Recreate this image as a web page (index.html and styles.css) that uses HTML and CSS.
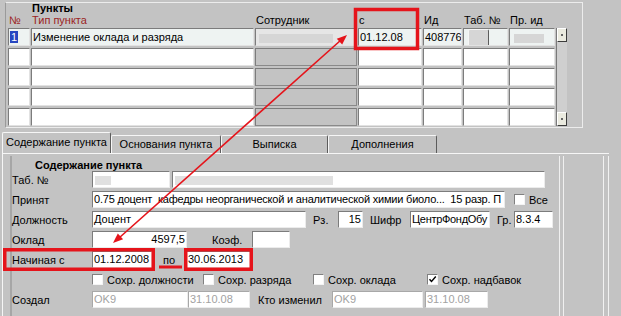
FILE: index.html
```html
<!DOCTYPE html>
<html lang="ru">
<head>
  <meta charset="UTF-8" />
  <title>Пункты приказа</title>
  <link rel="stylesheet" href="styles.css">
</head>
<body>

  <div class="screen">

    <div class="points">
      <div class="points-title">Пункты</div>

      <div class="points-grid">
        <div class="hd req">№</div>
        <div class="hd req">Тип пункта</div>
        <div class="hd">Сотрудник</div>
        <div class="hd">с</div>
        <div class="hd">Ид</div>
        <div class="hd">Таб. №</div>
        <div class="hd">Пр. ид</div>
        <div class="hd"></div>

        <div class="cell sel"><span class="cursor">1</span></div>
        <div class="cell sel">Изменение оклада и разряда</div>
        <div class="cell grey"><span class="blur emp"></span></div>
        <div class="cell sel">01.12.08</div>
        <div class="cell sel">408776</div>
        <div class="cell sel"><span class="blur tab"></span></div>
        <div class="cell sel"><span class="blur prid"></span></div>

        <div class="scroll">
          <div class="scroll-btn"></div>
          <div class="scroll-track"></div>
          <div class="scroll-btn"></div>
        </div>

        <div class="cell"></div><div class="cell"></div><div class="cell dim"></div><div class="cell"></div><div class="cell"></div><div class="cell"></div><div class="cell"></div>
        <div class="cell"></div><div class="cell"></div><div class="cell dim"></div><div class="cell"></div><div class="cell"></div><div class="cell"></div><div class="cell"></div>
        <div class="cell"></div><div class="cell"></div><div class="cell dim"></div><div class="cell"></div><div class="cell"></div><div class="cell"></div><div class="cell"></div>
        <div class="cell"></div><div class="cell"></div><div class="cell dim"></div><div class="cell"></div><div class="cell"></div><div class="cell"></div><div class="cell"></div>
      </div>
    </div>

    <div class="tabs">
      <div class="tab active t1">Содержание пункта</div>
      <div class="tab t2">Основания пункта</div>
      <div class="tab t3">Выписка</div>
      <div class="tab t4">Дополнения</div>
    </div>

    <div class="page">
      <div class="frame">
        <div class="frame-title">Содержание пункта</div>

        <div class="form">
          <div class="frow">
            <div class="lbl">Таб. №</div>
            <div class="fld w-tab"><span class="blur tabno"></span></div>
            <div class="fld w-fio"><span class="blur fio"></span></div>
          </div>

          <div class="frow">
            <div class="lbl">Принят</div>
            <div class="fld w-prin">0.75 доцент &nbsp;кафедры неорганической и аналитической химии биоло... &nbsp;15 разр. П</div>
            <div class="cb cb-all"><span class="box"></span>Все</div>
          </div>

          <div class="frow">
            <div class="lbl">Должность</div>
            <div class="fld w-dolzh">Доцент</div>
            <div class="lbl-in l-rz">Рз.</div>
            <div class="fld num w-rz">15</div>
            <div class="lbl-in l-shifr">Шифр</div>
            <div class="fld w-shifr">ЦентрФондОбу</div>
            <div class="lbl-in l-gr">Гр.</div>
            <div class="fld w-gr">8.3.4</div>
          </div>

          <div class="frow">
            <div class="lbl">Оклад</div>
            <div class="fld num w-oklad">4597,5</div>
            <div class="lbl-in l-koef">Коэф.</div>
            <div class="fld w-koef"></div>
          </div>

          <div class="frow">
            <div class="lbl">Начиная с</div>
            <div class="fld w-from">01.12.2008</div>
            <div class="lbl-in l-po">по</div>
            <div class="fld w-to">30.06.2013</div>
          </div>

          <div class="frow">
            <div class="lbl"></div>
            <div class="cb cb-1"><span class="box"></span>Сохр. должности</div>
            <div class="cb cb-2"><span class="box"></span>Сохр. разряда</div>
            <div class="cb cb-3"><span class="box"></span>Сохр. оклада</div>
            <div class="cb"><span class="box">
              <svg width="9" height="9" viewBox="0 0 9 9"><path d="M1.5 4.2 L3.5 6.5 L7.8 1.5" fill="none" stroke="#000" stroke-width="1.4"/></svg>
            </span>Сохр. надбавок</div>
          </div>

          <div class="frow">
            <div class="lbl">Создал</div>
            <div class="fld off w-who">OK9</div>
            <div class="fld off w-date">31.10.08</div>
            <div class="lbl-in l-edit">Кто изменил</div>
            <div class="fld off w-who2">OK9</div>
            <div class="fld off w-date2">31.10.08</div>
          </div>
        </div>
      </div>
    </div>

    <!-- красные пометки поверх скриншота -->
    <svg class="marks" width="621" height="316" viewBox="0 0 621 316">
      <g fill="none" stroke="#e5141b">
        <rect x="355.5" y="9.5" width="62" height="39" stroke-width="3.5"/>
        <rect x="4.75" y="249.75" width="148.5" height="19.5" stroke-width="3.5"/>
        <rect x="185.75" y="249.75" width="65.5" height="19.5" stroke-width="3.5"/>
        <line x1="159" y1="267" x2="182" y2="267" stroke-width="3"/>
        <line x1="341" y1="40" x2="119" y2="238" stroke-width="1.6"/>
      </g>
      <g fill="#e5141b">
        <polygon points="347,35 342.2,44.6 336.8,38.7"/>
        <polygon points="113,243 123.1,239.3 117.8,233.4"/>
      </g>
    </svg>

  </div>

</body>
</html>
```

FILE: styles.css
```css
* {
  margin: 0;
  padding: 0;
  box-sizing: border-box;
}

body {
  width: 621px;
  height: 316px;
  overflow: hidden;
  background: #c3c3c3;
  font-family: "Liberation Sans", Arial, sans-serif;
  font-size: 11px;
  color: #000;
}

.screen {
  position: relative;
  height: 316px;
  padding-top: 2px;
}

/* блок "Пункты" */

.points {
  margin-left: 5px;
  width: 578px;
  height: 126px;
  border: 1px solid #ececec;
  border-left-color: #9a9a9a;
  padding-left: 2px;
}

.points-title {
  height: 11px;
  line-height: 11px;
  font-weight: bold;
  padding-left: 24px;
}

.points-grid {
  display: grid;
  grid-template-columns: 22px 223px 102px 64px 39px 45px 46px 11px;
  grid-template-rows: 12px repeat(5, 18px);
  column-gap: 1px;
  row-gap: 2px;
}

.hd {
  line-height: 13px;
  padding-left: 1px;
  white-space: nowrap;
}

.hd.req {
  color: #9b2323;
}

.cell {
  background: #fff;
  border-top: 1px solid #7c7c7c;
  border-left: 1px solid #7c7c7c;
  border-right: 1px solid #e2e2e2;
  border-bottom: 1px solid #e2e2e2;
  line-height: 16px;
  padding-left: 1px;
  white-space: nowrap;
  overflow: hidden;
}

.cell.sel {
  background: #eef3f2;
}

.cell.grey {
  background: #e6e6e6;
}

.cell.dim {
  background: #c3c3c3;
  border-right-color: #8a8a8a;
  border-bottom-color: #8a8a8a;
}

.cursor {
  background: #2746c0;
  color: #fff;
  padding: 0 1px;
}

.blur {
  display: inline-block;
  height: 9px;
  background: #d6d6d6;
  vertical-align: middle;
}

.blur.emp { width: 74px; margin-left: 2px; }
.blur.tab { width: 21px; margin-left: 3px; }
.blur.prid { width: 30px; margin-left: 3px; }
.blur.tabno { width: 16px; margin-left: 1px; background: #e0e0e0; }
.blur.fio { width: 158px; margin-left: 1px; background: #e0e0e0; }

.scroll {
  grid-column: 8;
  grid-row: 2 / 7;
  display: flex;
  flex-direction: column;
  background: #cfcfcf;
  border-left: 1px solid #7a7a7a;
}

.scroll-btn {
  height: 14px;
  background: #ebebe0;
  border: 1px solid;
  border-color: #fff #3c3c3c #3c3c3c #fff;
  display: flex;
  align-items: center;
  justify-content: center;
}

.scroll-btn::after {
  content: "";
  width: 2px;
  height: 2px;
  background: #666;
}

.scroll-track {
  flex: 1;
}

/* вкладки */

.tabs {
  display: flex;
  align-items: flex-end;
  margin: 4px 0 0 2px;
  height: 21px;
}

.tab {
  height: 18px;
  border: 1px solid #f6f6f6;
  border-bottom: none;
  border-right-color: #5c5c5c;
  border-radius: 2px 2px 0 0;
  text-align: center;
  line-height: 16px;
  white-space: nowrap;
}

.tab.active {
  height: 21px;
  line-height: 18px;
}

.t1 { width: 109px; }
.t2 { width: 110px; }
.t3 { width: 107px; }
.t4 { width: 109px; }

.page {
  margin-left: 2px;
  width: 607px;
  height: 163px;
  border-top: 1px solid #f6f6f6;
  border-left: 1px solid #f6f6f6;
  padding: 2px 0 0 7px;
  display: flex;
}

.page::after {
  content: "";
  width: 4px;
  margin-left: 39px;
  border-left: 1px solid #f2f2f2;
  border-right: 1px solid #f2f2f2;
}

.frame {
  width: 557px;
  height: 100%;
  border-left: 2px solid #a6a6a6;
  border-right: 1px solid #f0f0f0;
  position: relative;
}

.frame::after {
  content: "";
  position: absolute;
  top: 0;
  bottom: 0;
  right: 3px;
  border-right: 1px solid #f0f0f0;
}

.frame-title {
  height: 15px;
  padding: 3px 0 0 23px;
  line-height: 12px;
  font-weight: bold;
}

/* форма */

.form {
  display: flex;
  flex-direction: column;
  gap: 3px;
}

.frow {
  display: flex;
  align-items: center;
  height: 17px;
}

.lbl {
  width: 80px;
  flex-shrink: 0;
}

.lbl-in {
  flex-shrink: 0;
  padding-left: 7px;
  white-space: nowrap;
}

.fld {
  flex-shrink: 0;
  height: 17px;
  background: #fff;
  border-top: 1px solid #7c7c7c;
  border-left: 1px solid #7c7c7c;
  border-right: 1px solid #ececec;
  border-bottom: 1px solid #ececec;
  line-height: 15px;
  padding: 0 1px;
  white-space: nowrap;
  overflow: hidden;
}

.fld.num {
  text-align: right;
}

.fld.off {
  color: #a2a2a2;
  border-top-color: #a8a8a8;
  border-left-color: #a8a8a8;
}

.w-tab { width: 78px; }
.w-fio { width: 373px; margin-left: 2px; }
.w-prin { width: 413px; letter-spacing: -0.2px; }
.w-dolzh { width: 214px; }
.w-rz { width: 25px; }
.w-shifr { width: 80px; letter-spacing: -0.3px; }
.w-gr { width: 39px; }
.w-oklad { width: 95px; }
.w-koef { width: 38px; }
.w-from { width: 60px; }
.w-to { width: 65px; }
.w-who { width: 96px; }
.w-date { width: 62px; }
.w-who2 { width: 91px; }
.w-date2 { width: 63px; margin-left: 2px; }

.l-rz { width: 32px; }
.l-shifr { width: 47px; }
.l-gr { width: 24px; }
.l-koef { width: 65px; padding-left: 25px; }
.l-po { width: 34px; padding-left: 11px; }
.l-edit { width: 82px; padding-left: 8px; }

.cb {
  display: flex;
  align-items: center;
  white-space: nowrap;
  flex-shrink: 0;
}

.cb-all { margin-left: 9px; }
.cb-1 { width: 111px; }
.cb-2 { width: 110px; }
.cb-3 { width: 114px; }

.box {
  width: 11px;
  height: 11px;
  background: #fff;
  border: 1px solid;
  border-color: #808080 #f4f4f4 #f4f4f4 #808080;
  margin-right: 4px;
  display: flex;
  align-items: center;
  justify-content: center;
}

.marks {
  position: absolute;
  top: 0;
  left: 0;
  pointer-events: none;
}
```
